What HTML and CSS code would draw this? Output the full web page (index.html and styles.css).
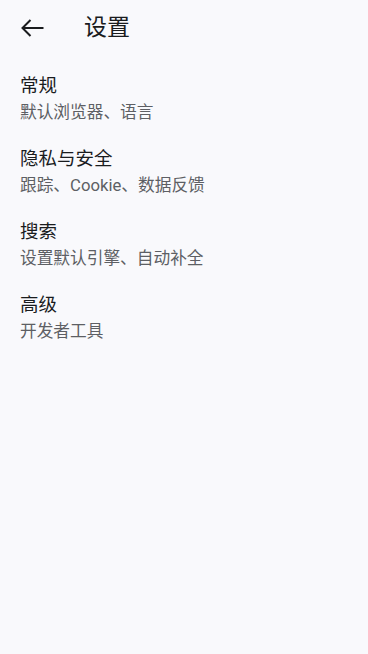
FILE: index.html
```html
<!DOCTYPE html>
<html lang="zh-CN">
<head>
<meta charset="utf-8">
<link rel="stylesheet" href="styles.css">
</head>
<body>
<header class="topbar">
  <button class="back" aria-label="返回">
    <svg width="24" height="20" viewBox="0 0 24 20" fill="none" stroke="#1a1c1e" stroke-width="2" stroke-linecap="butt" stroke-linejoin="miter">
      <path d="M1.5 10H22.5"/>
      <path d="M9.5 2L1.5 10l8 8"/>
    </svg>
  </button>
  <h1 class="title">设置</h1>
</header>
<main class="list">
  <div class="item">
    <div class="item-title">常规</div>
    <div class="item-sub">默认浏览器、语言</div>
  </div>
  <div class="item">
    <div class="item-title">隐私与安全</div>
    <div class="item-sub">跟踪、Cookie、数据反馈</div>
  </div>
  <div class="item">
    <div class="item-title">搜索</div>
    <div class="item-sub">设置默认引擎、自动补全</div>
  </div>
  <div class="item">
    <div class="item-title">高级</div>
    <div class="item-sub">开发者工具</div>
  </div>
</main>
</body>
</html>
```
FILE: styles.css
```css
html, body {
  margin: 0;
  padding: 0;
  background: #f9f9fc;
  font-family: Roboto, "Noto Sans CJK SC", sans-serif;
  color: #1a1c1e;
}
.topbar {
  height: 56px;
  display: flex;
  align-items: center;
  padding-left: 21px;
}
.back {
  border: none;
  background: none;
  padding: 0;
  width: 24px;
  height: 20px;
  display: flex;
  align-items: center;
}
.title {
  margin: 0 0 0 39px;
  font-size: 23px;
  font-weight: 400;
  line-height: 28px;
}
.list {
  padding-top: 8px;
  display: flex;
  flex-direction: column;
}
.item {
  padding: 9px 20px 11px;
  display: flex;
  flex-direction: column;
}
.item-title {
  font-size: 18.5px;
  line-height: 26px;
  color: #1a1c1e;
}
.item-sub {
  font-size: 16.7px;
  line-height: 27px;
  color: #5d5f64;
}
```
